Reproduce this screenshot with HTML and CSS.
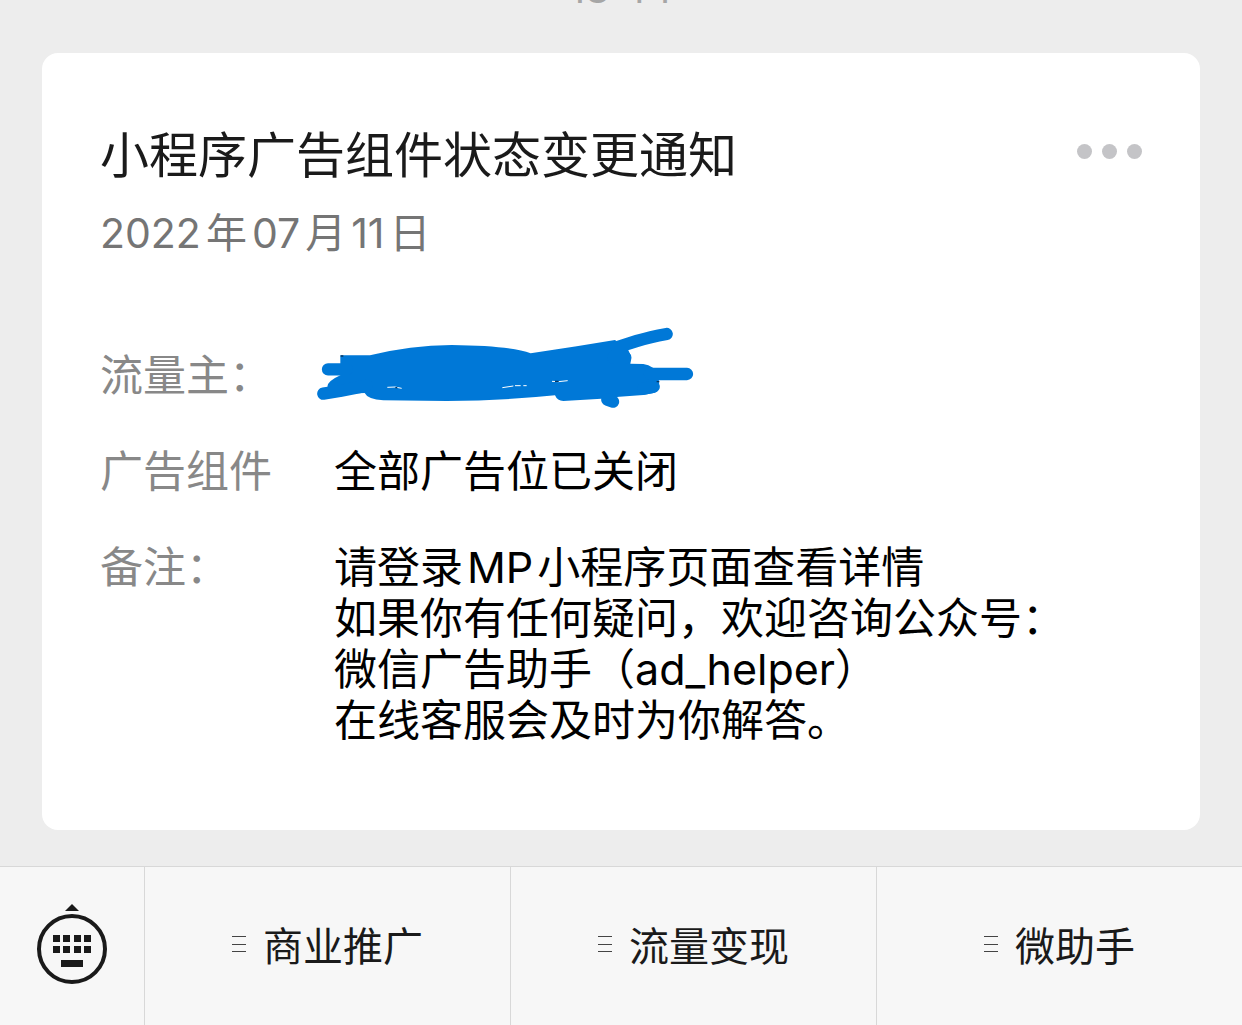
FILE: index.html
```html
<!DOCTYPE html>
<html lang="zh-CN">

<head>
  <meta charset="UTF-8" />
  <meta name="viewport" content="width=device-width, initial-scale=1.0" />
  <title>小程序广告组件状态变更通知</title>
  <link rel="stylesheet" href="styles.css">
</head>

<body>
  <main class="chat">
    <time class="stamp">18:44</time>
    <article class="card">
      <header class="card-head">
        <h1>小程序广告组件状态变更通知</h1>
        <button type="button" class="more" aria-label="更多"><span></span><span></span><span></span></button>
      </header>
      <time class="date" datetime="2022-07-11">2022<span class="cjk">年</span>07<span class="cjk">月</span>11<span class="cjk">日</span></time>
      <dl class="info">
        <dt>流量主：</dt>
        <dd class="hidden-name">
          <svg class="scribble" width="410" height="105" viewBox="0 0 1230 315" fill="#0078d7" aria-hidden="true">
            <path d="M121 121L210 121Q330 91 455 90Q630 92 692 115L830 94L945 75L985 106Q997 125 991 146L1030 147Q1045 149 1060 159L1077 197Q1080 229 1061 234L1030 240L958 245L904 251L790 258Q772 258 765 241Q610 257 440 258L250 256Q203 253 194 234L140 236L82 215Q83 198 121 181Z" />
            <path d="M84 163H140M70 236L120 228L200 212M1100 57Q1050 66 1010 78L950 97M1161 177H1050M939 260L922 254M1061 215L1030 221M976 128L940 128" fill="none" stroke="#0078d7" stroke-width="37" stroke-linecap="round" stroke-linejoin="round" />
            <path d="M262 217L285 216L305 220M607 218L640 213M645 212L662 212M670 212L680 212M756 199L775 200L803 197" fill="none" stroke="#fff" stroke-width="3" />
            <path d="M122 123H130M1070 200H1078M765 199H776M286 218H292" fill="none" stroke="#07365f" stroke-width="4" />
          </svg>
        </dd>
        <dt>广告组件</dt>
        <dd>全部广告位已关闭</dd>
        <dt>备注：</dt>
        <dd>
          请登录<span class="latin">MP</span>小程序页面查看详情<br>
          如果你有任何疑问，欢迎咨询公众号：<br>
          微信广告助手（ad_helper）<br>
          在线客服会及时为你解答。
        </dd>
      </dl>
    </article>
  </main>

  <nav class="menu">
    <button type="button" class="keyboard" aria-label="键盘">
      <svg width="72" height="82" viewBox="0 0 72 82" fill="#1a1a1a">
        <path d="M36 1L43 8H29Z" />
        <circle cx="36" cy="46" r="33" fill="none" stroke="#1a1a1a" stroke-width="4" />
        <path d="M17 32h7v7h-7zM27 32h7v7h-7zM38 32h7v7h-7zM48 32h7v7h-7zM17 43h7v7h-7zM27 43h7v7h-7zM38 43h7v7h-7zM48 43h7v7h-7zM25 57h22v7H25z" />
      </svg>
    </button>
    <button type="button" class="item"><span class="lines"></span>商业推广</button>
    <button type="button" class="item"><span class="lines"></span>流量变现</button>
    <button type="button" class="item"><span class="lines"></span>微助手</button>
  </nav>
</body>

</html>
```

FILE: styles.css
```css
*,
::before,
::after {
  box-sizing: border-box;
}

body {
  margin: 0;
  min-height: 100vh;
  display: flex;
  flex-direction: column;
  overflow-x: hidden;
  background: #ededed;
  color: #000;
  font-family: Inter, 'Noto Sans CJK SC', sans-serif;
}

button {
  margin: 0;
  padding: 0;
  border: 0;
  background: none;
  color: inherit;
  font: inherit;
}

.chat {
  flex: 1;
  padding: 0 42px 36px;
}

/* scrolled almost out of view */
.stamp {
  display: block;
  margin: -36px 0 39px;
  text-align: center;
  font-size: 40px;
  line-height: 50px;
  color: #a6a6a6;
}

.card {
  padding: 73px 58px 84px;
  border-radius: 16px;
  background: #fff;
}

.card-head {
  display: flex;
  justify-content: space-between;
  align-items: flex-start;
}

h1 {
  margin: 0;
  font-size: 49px;
  font-weight: 400;
  line-height: 60px;
  color: #1a1a1a;
}

.more {
  display: flex;
  gap: 10px;
  padding-top: 18px;
}

.more span {
  width: 15px;
  height: 15px;
  border-radius: 50%;
  background: #c4c4c7;
}

.date {
  display: block;
  margin-top: 22px;
  font-size: 41px;
  line-height: 50px;
  color: #757575;
}

.date .cjk {
  margin: 0 5px;
}

.info {
  display: grid;
  grid-template-columns: 234px 1fr;
  row-gap: 45px;
  margin: 92px 0 0;
  font-size: 43px;
  line-height: 51px;
}

.info dt {
  color: #888;
}

.info dd {
  margin: 0;
}

.latin {
  margin: 0 4px;
}

.hidden-name {
  position: relative;
}

/* drawn over the name */
.scribble {
  position: absolute;
  left: -34px;
  top: -35px;
}

.menu {
  display: grid;
  grid-template-columns: 144px 1fr 1fr 1fr;
  height: 159px;
  border-top: 1px solid #d8d8d8;
  background: #f7f7f7;
}

.menu button {
  display: flex;
  justify-content: center;
  align-items: center;
  padding-bottom: 4px;
}

.menu .item {
  gap: 17px;
  border-left: 1px solid #d8d8d8;
  font-size: 40px;
  color: #1a1a1a;
}

.lines {
  width: 14px;
  height: 16px;
  border: solid #444;
  border-width: 1px 0;
  background: linear-gradient(#444, #444) center / 100% 1px no-repeat;
}
```
